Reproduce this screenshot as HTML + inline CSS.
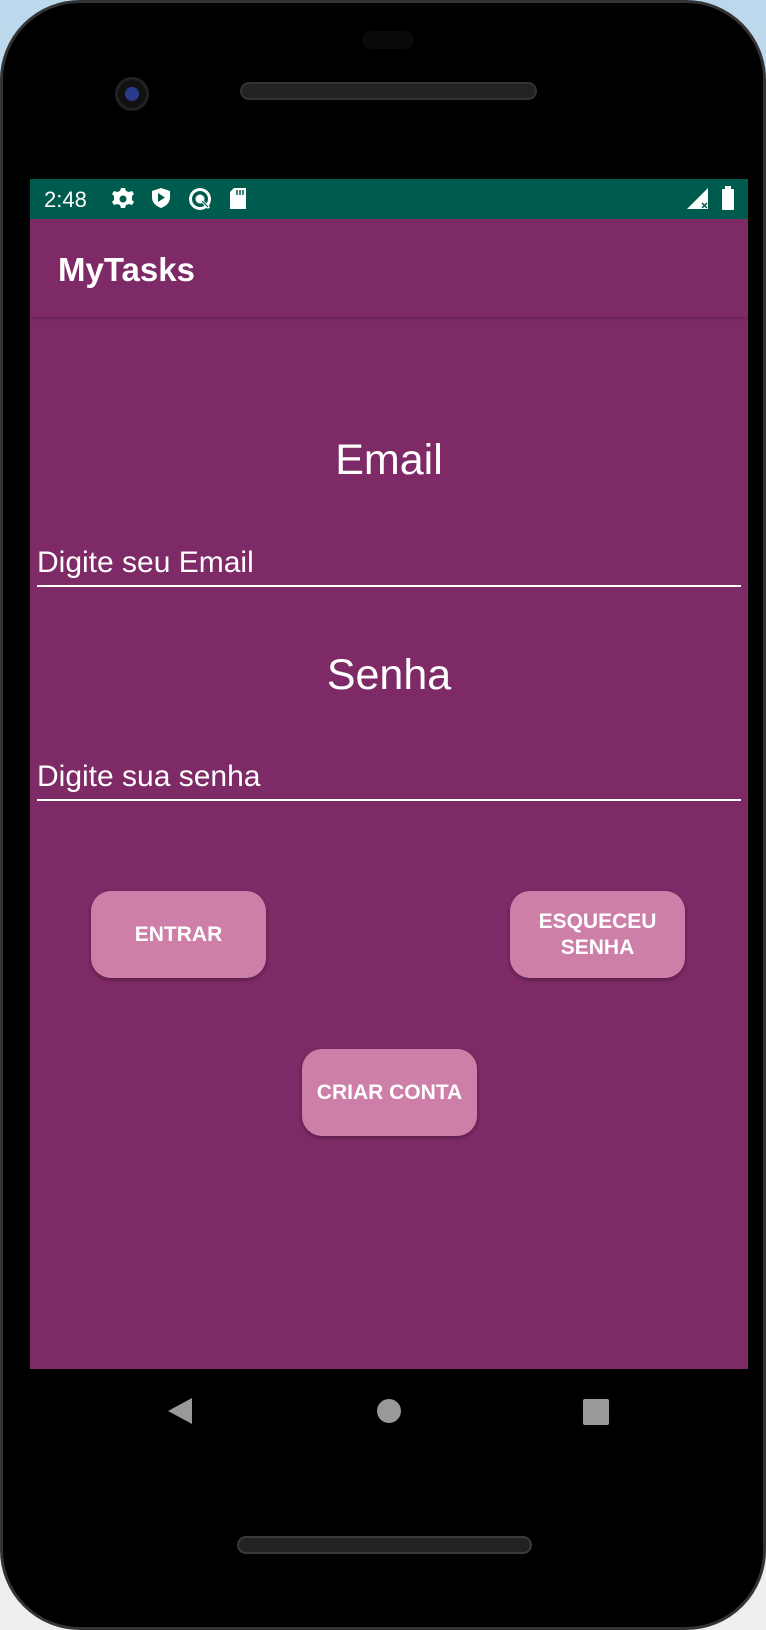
<!DOCTYPE html>
<html><head><meta charset="utf-8"><style>
*{margin:0;padding:0;box-sizing:border-box}
body{width:766px;height:1630px;background:linear-gradient(#bcd8ec,#e8eef2 50%,#eeeeee);position:relative;overflow:hidden;font-family:"Liberation Sans",sans-serif}
.phone{position:absolute;left:0;top:0;width:766px;height:1630px;background:#000;border-radius:80px;border:3px solid #333}
.abs{position:absolute}
.screen{left:30px;top:179px;width:718px;height:1190px;background:#7e2a66}
.status{left:30px;top:179px;width:718px;height:40px;background:#005b4f;color:#fff}
.appbar{left:30px;top:219px;width:718px;height:98px;background:#7e2a66;box-shadow:0 2px 3px rgba(0,0,0,.15)}
.t{color:#fff;position:absolute}
.btn{position:absolute;background:#cd7fa8;border-radius:20px;color:#fff;font-weight:bold;font-size:21px;display:flex;align-items:center;justify-content:center;text-align:center;line-height:26px;box-shadow:0 2px 4px rgba(0,0,0,.3)}
.line{position:absolute;left:37px;width:704px;height:2px;background:#fff}
</style></head><body>
<div class="phone"></div>
<div class="abs" style="left:362px;top:31px;width:52px;height:18px;border-radius:9px;background:#0a0a0c"></div>
<div class="abs" style="left:240px;top:82px;width:297px;height:18px;border-radius:9px;background:#222;border:2px solid #333"></div>
<div class="abs" style="left:115px;top:77px;width:34px;height:34px;border-radius:50%;background:#111;border:3px solid #222"><div style="margin:7px;width:14px;height:14px;border-radius:50%;background:#2a3a8a"></div></div>
<div class="abs screen"></div>
<div class="abs status">
<span class="t" style="left:14px;top:8px;font-size:22px">2:48</span>
<svg class="abs" style="left:0;top:0" width="718" height="40" viewBox="0 0 718 40" fill="#fff">
<g transform="translate(93,20)">
<path d="M-2-11h4l1 3 3 1 3-1 2 3-2 2v4l2 2-2 3-3-1-3 1-1 3h-4l-1-3-3-1-3 1-2-3 2-2v-4l-2-2 2-3 3 1 3-1z"/>
<circle r="3.5" fill="#005b4f"/></g>
<path d="M131 9l9 3v6c0 6-4 9-9 11-5-2-9-5-9-11v-6z"/><path d="M128 14v9l7-4.5z" fill="#005b4f"/>
<circle cx="170" cy="20" r="11"/><circle cx="170" cy="20" r="8" fill="#005b4f"/><circle cx="170" cy="20" r="4.5"/><path d="M172 22l7 7" stroke="#fff" stroke-width="3"/><path d="M172 22l6 6" stroke="#005b4f" stroke-width="1.2"/>
<path d="M204 9h12v21h-16V13z"/><path d="M207 11v5M210 11v5M213 11v5" stroke="#005b4f" stroke-width="1.5"/>
<path d="M657 30L678 9v21z"/><path d="M672 24l5 5M677 24l-5 5" stroke="#005b4f" stroke-width="1.5"/>
<rect x="692" y="10" width="12" height="21" rx="1"/><rect x="695" y="7" width="6" height="4"/>
</svg>
</div>
<div class="abs appbar"><span class="t" style="left:28px;top:32px;font-size:33px;font-weight:bold">MyTasks</span></div>
<div class="t" style="left:30px;width:718px;text-align:center;top:436px;font-size:43px">Email</div>
<div class="t" style="left:37px;top:546px;font-size:30px">Digite seu Email</div>
<div class="line" style="top:585px"></div>
<div class="t" style="left:30px;width:718px;text-align:center;top:651px;font-size:43px">Senha</div>
<div class="t" style="left:37px;top:760px;font-size:30px">Digite sua senha</div>
<div class="line" style="top:799px"></div>
<div class="btn" style="left:91px;top:891px;width:175px;height:87px">ENTRAR</div>
<div class="btn" style="left:510px;top:891px;width:175px;height:87px">ESQUECEU<br>SENHA</div>
<div class="btn" style="left:302px;top:1049px;width:175px;height:87px">CRIAR CONTA</div>
<svg class="abs" style="left:160px;top:1393px" width="460" height="36" viewBox="0 0 460 36" fill="#999">
<path d="M32 5L8 18l24 13z"/><circle cx="229" cy="18" r="12"/><rect x="423" y="6" width="26" height="26" rx="2"/>
</svg>
<div class="abs" style="left:237px;top:1536px;width:295px;height:18px;border-radius:9px;background:#222;border:2px solid #3a3a3a"></div>
</body></html>
